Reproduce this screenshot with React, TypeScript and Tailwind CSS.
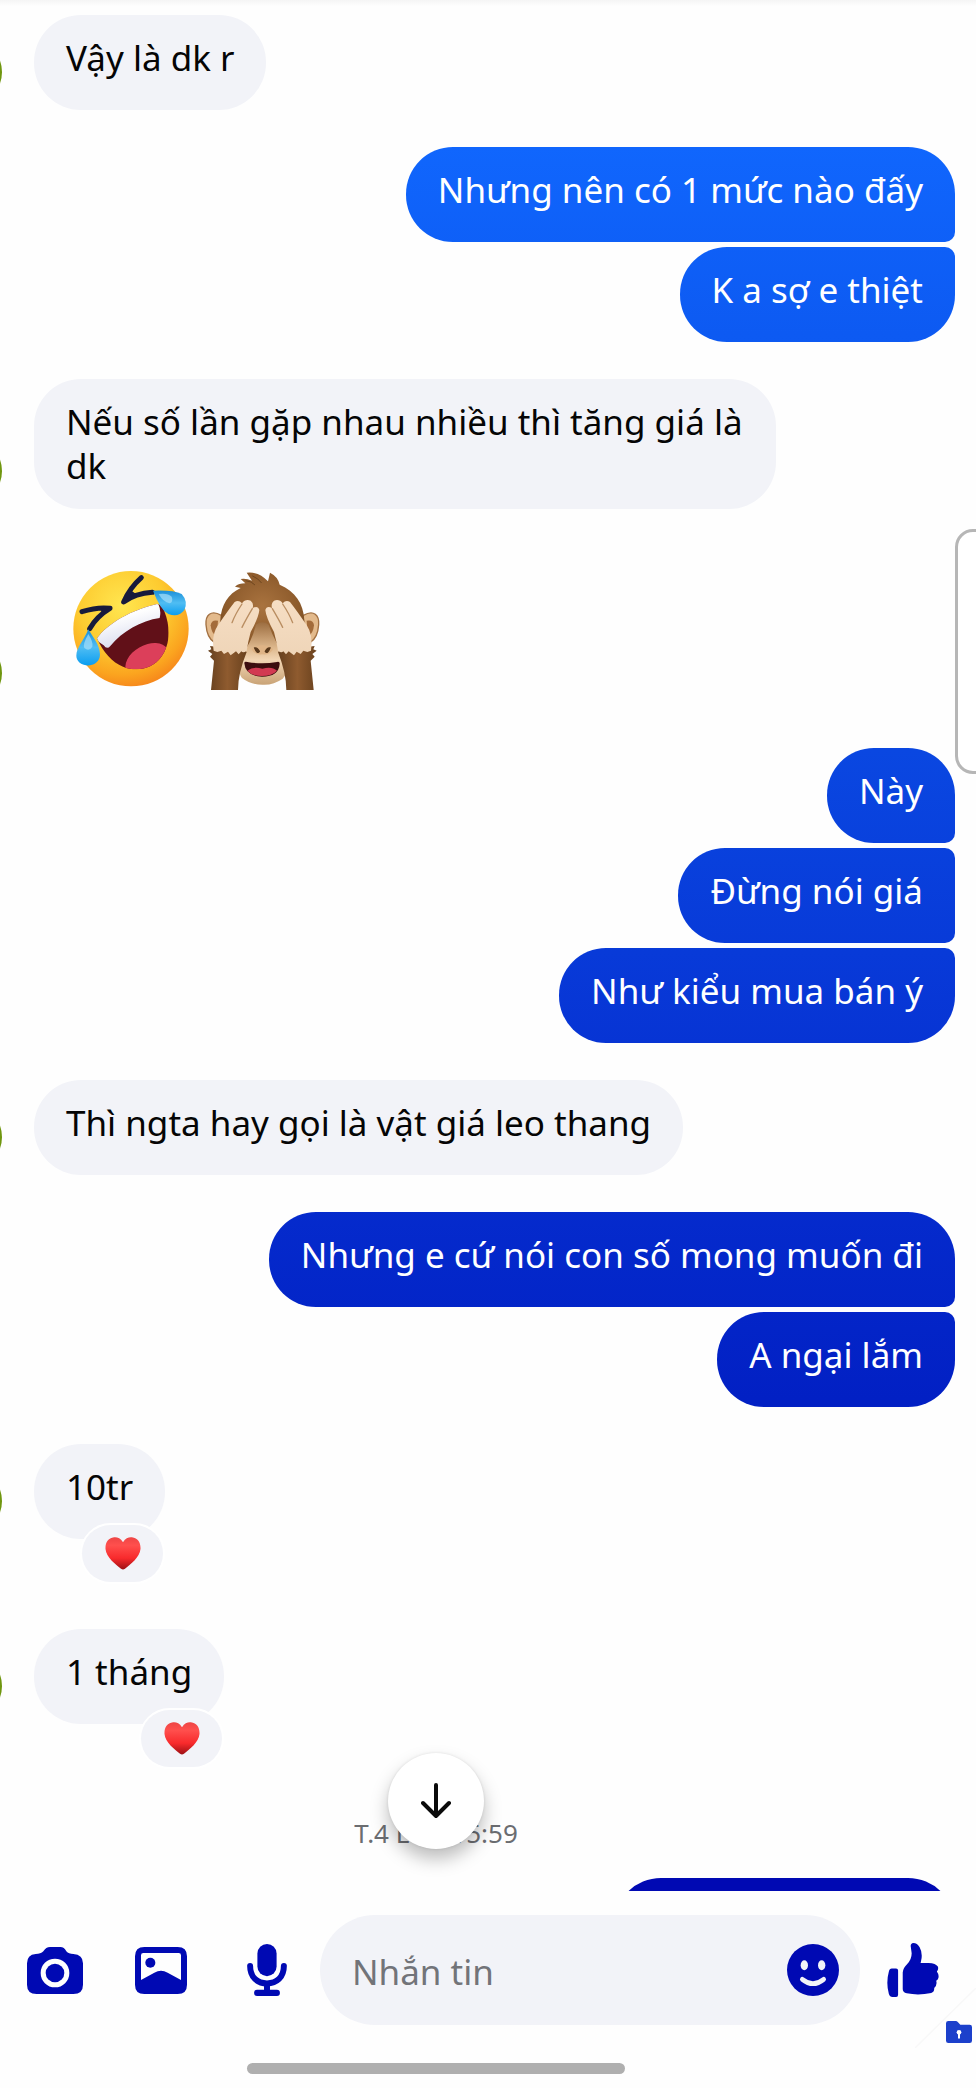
import React, { useState } from "react";
import clsx from "clsx";

type Side = "left" | "right";

interface Message {
  text?: string;
  emojis?: boolean;
  reaction?: boolean;
}

interface MessageGroup {
  side: Side;
  messages: Message[];
}

const GROUPS: MessageGroup[] = [
  { side: "left", messages: [{ text: "Vậy là dk r" }] },
  { side: "right", messages: [{ text: "Nhưng nên có 1 mức nào đấy" }, { text: "K a sợ e thiệt" }] },
  { side: "left", messages: [{ text: "Nếu số lần gặp nhau nhiều thì tăng giá là dk" }] },
  { side: "left", messages: [{ emojis: true }] },
  {
    side: "right",
    messages: [{ text: "Này" }, { text: "Đừng nói giá" }, { text: "Như kiểu mua bán ý" }],
  },
  { side: "left", messages: [{ text: "Thì ngta hay gọi là vật giá leo thang" }] },
  { side: "right", messages: [{ text: "Nhưng e cứ nói con số mong muốn đi" }, { text: "A ngại lắm" }] },
  { side: "left", messages: [{ text: "10tr", reaction: true }] },
  { side: "left", messages: [{ text: "1 tháng", reaction: true }] },
];

function LaughingEmoji() {
  return (
    <svg viewBox="94 88 360 360" className="size-[120px]" role="img" aria-label="Cười lăn lộn">
      <defs>
        <radialGradient id="face" cx="0.42" cy="0.3" r="0.75">
          <stop offset="0" stopColor="#ffe650" />
          <stop offset="0.5" stopColor="#fdcb30" />
          <stop offset="0.8" stopColor="#fba41f" />
          <stop offset="1" stopColor="#f57f1a" />
        </radialGradient>
        <linearGradient id="tear" x1="0" y1="0" x2="0" y2="1">
          <stop offset="0" stopColor="#1c8fd8" />
          <stop offset="0.5" stopColor="#4fbdf3" />
          <stop offset="1" stopColor="#0a9df0" />
        </linearGradient>
        <linearGradient id="teeth" x1="0" y1="0" x2="0.4" y2="1">
          <stop offset="0" stopColor="#c9cbe0" />
          <stop offset="0.4" stopColor="#ffffff" />
          <stop offset="1" stopColor="#d8dbee" />
        </linearGradient>
        <clipPath id="laugh">
          <path d="M172 293C206 246 276 208 352 190Q366 190 374 212C396 268 388 318 364 350C338 386 290 394 250 378C218 366 190 334 172 293Z" />
        </clipPath>
      </defs>
      <circle cx="274" cy="264" r="173" fill="url(#face)" />
      <g clipPath="url(#laugh)">
        <rect x="160" y="170" width="240" height="230" fill="#611018" />
        <ellipse cx="322" cy="360" rx="70" ry="46" transform="rotate(-30 322 360)" fill="#dc3f5a" />
        <path d="M160 292C200 240 276 204 354 186Q366 208 360 232C304 240 248 272 212 316Q202 328 192 314Z" fill="url(#teeth)" />
      </g>
      <g fill="#171a3c" stroke="#171a3c" strokeWidth="15" strokeLinecap="round" strokeLinejoin="round">
        <path d="M305 111Q270 142 252 184Q288 158 338 155" fill="none" />
        <path d="M127 213Q174 198 211 203Q170 228 150 264" fill="none" />
        <path d="M264 172L274 152L286 160ZM200 208L186 204L188 220Z" strokeWidth="4" />
      </g>
      <path d="M340 150Q402 148 426 160Q446 182 434 208Q416 232 386 220Q362 208 340 150Z" fill="url(#tear)" />
      <path d="M357 160Q384 156 396 168Q402 184 390 188Q370 184 357 160Z" fill="#a5def9" opacity="0.7" />
      <path d="M146 266C160 290 186 320 180 350C174 374 142 382 120 366C92 340 130 306 146 266Z" fill="url(#tear)" />
      <path d="M146 280Q162 306 158 318Q148 334 134 322Q128 312 146 280Z" fill="#a5def9" opacity="0.7" />
    </svg>
  );
}

function MonkeyEmoji() {
  return (
    <svg viewBox="489 90 360 360" className="size-[120px]" role="img" aria-label="Khỉ che mắt">
      <defs>
        <radialGradient id="fur" cx="0.5" cy="0.4" r="0.6">
          <stop offset="0" stopColor="#a9733f" />
          <stop offset="0.7" stopColor="#8c5a2b" />
          <stop offset="1" stopColor="#6d451e" />
        </radialGradient>
        <linearGradient id="arm" x1="0" y1="0" x2="1" y2="0">
          <stop offset="0" stopColor="#65401f" />
          <stop offset="0.5" stopColor="#8f5b2f" />
          <stop offset="1" stopColor="#6a421e" />
        </linearGradient>
        <linearGradient id="skin" x1="0" y1="0" x2="0" y2="1">
          <stop offset="0" stopColor="#f6dec4" />
          <stop offset="1" stopColor="#efd5b8" />
        </linearGradient>
        <linearGradient id="muzzle" x1="0" y1="0" x2="0" y2="1">
          <stop offset="0" stopColor="#9c6d40" />
          <stop offset="0.4" stopColor="#dcb68b" />
          <stop offset="0.6" stopColor="#f2d6b4" />
          <stop offset="1" stopColor="#c9a376" />
        </linearGradient>
      </defs>
      <path d="M544 226C512 208 496 226 498 254C500 284 510 300 524 308H550Z" fill="#e3ba8c" stroke="#a37142" strokeWidth="4" />
      <path d="M790 226C822 208 838 226 836 254C834 284 824 300 810 308H784Z" fill="#e3ba8c" stroke="#a37142" strokeWidth="4" />
      <path d="M534 242Q514 238 512 256Q514 280 530 290Z" fill="#a36b3a" />
      <path d="M800 242Q820 238 822 256Q820 280 804 290Z" fill="#a36b3a" />
      <path
        d="M541 240C544 194 564 162 602 144L585 140Q596 130 616 130L602 117Q618 114 636 122L620 98Q656 94 684 124L690 98Q714 110 719 134C766 154 790 190 793 240L800 320L770 350H568L534 320Z"
        fill="url(#fur)"
      />
      <path d="M638 108Q656 116 664 128M618 122Q636 124 644 134" fill="none" stroke="#6d451e" strokeWidth="3" strokeLinecap="round" />
      <path d="M648 254Q667 240 686 254Q706 310 738 352Q748 396 728 416Q700 436 667 434Q632 434 606 414Q590 392 600 352Q634 310 648 254Z" fill="url(#muzzle)" />
      <path d="M634 326Q667 306 700 326Q690 346 667 343Q644 346 634 326Z" fill="#dfb486" />
      <path d="M644 324Q652 322 658 334Q652 344 644 324ZM690 324Q682 322 676 334Q682 344 690 324Z" fill="#58391c" stroke="#58391c" strokeWidth="4" />
      <path d="M613 370Q612 364 622 366Q667 374 711 366Q720 364 719 372Q716 410 666 410Q616 408 613 370Z" fill="#3c0d0e" />
      <path d="M622 392Q640 378 667 386Q696 378 711 392Q696 408 666 408Q636 408 622 392Z" fill="#d23a52" />
      <path d="M510 318L514 328L504 332L517 342L510 350L522 362L513 450H594Q594 400 620 336L600 322H540Z" fill="url(#arm)" />
      <path d="M824 318L820 328L830 332L817 342L824 350L812 362L821 450H739Q739 400 714 336L734 322H794Z" fill="url(#arm)" />
      {/* hands over the eyes */}
      <path
        d="M521 332Q514 284 534 256Q562 214 584 186Q596 178 606 190Q616 176 632 182Q642 190 638 204Q654 196 658 210Q656 232 632 276Q624 306 620 332Q610 340 604 334L596 343L588 334L572 346L564 335L552 342L544 332L532 336Z"
        fill="url(#skin)"
      />
      <path
        d="M813 332Q820 284 800 256Q772 214 750 186Q738 178 728 190Q718 176 702 182Q692 190 696 204Q680 196 676 210Q678 232 702 276Q710 306 714 332Q724 340 730 334L738 343L746 334L762 346L770 335L782 342L790 332L802 336Z"
        fill="url(#skin)"
      />
      <g fill="none" stroke="#b98d61" strokeWidth="4" strokeLinecap="round">
        <path d="M606 192Q586 222 576 248M637 206Q618 238 606 262" />
        <path d="M728 192Q748 222 758 248M697 206Q716 238 728 262" />
      </g>
    </svg>
  );
}

function Heart() {
  return (
    <svg viewBox="0 0 108 100" className="h-[33px] w-9" role="img" aria-label="Yêu thích">
      <defs>
        <linearGradient id="heart" x1="0" y1="0" x2="0" y2="1">
          <stop offset="0" stopColor="#ee4545" />
          <stop offset="0.25" stopColor="#ff4f4d" />
          <stop offset="0.65" stopColor="#f82a2c" />
          <stop offset="1" stopColor="#9c1014" />
        </linearGradient>
      </defs>
      <path d="M54 16C46 3 36 0 27 1C8 3 0 18 1 36C3 62 32 82 48 96Q54 101 60 96C76 82 105 62 107 36C108 18 100 3 81 1C72 0 62 3 54 16Z" fill="url(#heart)" />
    </svg>
  );
}

function Bubble({ message, side, first, last }: { message: Message; side: Side; first: boolean; last: boolean }) {
  if (message.emojis) {
    return (
      <div className="flex gap-3 pt-6 pr-8 pb-[21px] pl-[37px]">
        <LaughingEmoji />
        <MonkeyEmoji />
      </div>
    );
  }

  return (
    <div
      className={clsx(
        "relative min-h-[95px] max-w-[742px] rounded-[47px] px-8 py-[21px] text-[35px] leading-[44px]",
        side === "left" && "bg-[#f2f3f8] text-[#050505]",
        side === "right" &&
          "bg-[linear-gradient(#116aff,#1066fd_7%,#0d5af2_16%,#0a47e1_36%,#0734d4_50%,#0220c4_67%,#0009b3_90%)] bg-fixed text-white",
        side === "right" && !first && "rounded-tr-[10px]",
        side === "right" && !last && "rounded-br-[10px]",
      )}
    >
      {message.text}
      {message.reaction && (
        <span className="absolute right-[2px] -bottom-[43px] flex h-[57px] w-[81px] items-center justify-center rounded-full bg-[#f2f3f8] ring-2 ring-white">
          <Heart />
        </span>
      )}
    </div>
  );
}

function Group({ group }: { group: MessageGroup }) {
  const hasReaction = group.messages.some((m) => m.reaction);

  if (group.side === "right") {
    return (
      <li className="flex flex-col items-end gap-[5px] pr-[21px]">
        {group.messages.map((m, i) => (
          <Bubble key={i} message={m} side="right" first={i === 0} last={i === group.messages.length - 1} />
        ))}
      </li>
    );
  }

  return (
    <li className={clsx("flex items-end gap-8", hasReaction && "mb-[53px]")}>
      {/* avatar, mostly past the left edge */}
      <div className="mb-1 -ml-[66px] size-[68px] shrink-0 rounded-full bg-[#6f960f]" />
      {group.messages.map((m, i) => (
        <Bubble key={i} message={m} side="left" first last />
      ))}
    </li>
  );
}

function CameraIcon() {
  return (
    <svg viewBox="81 139 168 141" className="h-[47px] w-14" aria-hidden="true">
      <path
        fill="currentColor"
        fillRule="evenodd"
        d="M107 160Q122 160 130 152Q138 139 150 139H181Q193 139 199 152Q206 160 220 160Q249 162 249 188V252Q249 280 220 280H110Q81 280 81 252V188Q81 162 107 160ZM165 174A43 43 0 1 0 165 260A43 43 0 1 0 165 174Z"
      />
      <circle cx="165" cy="217" r="28" fill="currentColor" />
    </svg>
  );
}

function PhotoIcon() {
  return (
    <svg viewBox="405 139 156 141" className="h-[47px] w-[52px]" aria-hidden="true">
      <path
        fill="currentColor"
        fillRule="evenodd"
        d="M433 139H533Q561 139 561 167V252Q561 280 533 280H433Q405 280 405 252V167Q405 139 433 139ZM430 157Q423 157 423 164V238L463 216Q483 204 503 216L543 238V164Q543 157 536 157Z"
      />
      <circle cx="451" cy="186" r="15" fill="currentColor" />
    </svg>
  );
}

function MicIcon() {
  return (
    <svg viewBox="741 131 120 157" className="h-[52px] w-10" aria-hidden="true">
      <rect x="772" y="131" width="58" height="97" rx="29" fill="currentColor" />
      <path d="M750 197C750 232 772 250 801 250C830 250 852 232 852 197" fill="none" stroke="currentColor" strokeWidth="18" strokeLinecap="round" />
      <rect x="792" y="250" width="18" height="26" fill="currentColor" />
      <rect x="762" y="269" width="78" height="19" rx="9" fill="currentColor" />
    </svg>
  );
}

function SmileIcon() {
  return (
    <svg viewBox="141 132 156 156" className="size-[52px]" aria-hidden="true">
      <circle cx="219" cy="210" r="78" fill="currentColor" />
      <ellipse cx="193" cy="196" rx="11" ry="15" fill="#f2f3f8" />
      <ellipse cx="245" cy="196" rx="11" ry="15" fill="#f2f3f8" />
      <path d="M187 238Q219 264 251 238" fill="none" stroke="#f2f3f8" strokeWidth="14" strokeLinecap="round" />
    </svg>
  );
}

function ThumbIcon() {
  return (
    <svg viewBox="441 125 156 163" className="h-[54px] w-[52px]" fill="currentColor" aria-hidden="true">
      <path d="M455 202H468Q474 202 474 208V281Q474 288 468 288H457Q449 288 446 278Q437 245 446 212Q448 202 455 202Z" />
      <path d="M488 214Q489 200 501 189Q515 175 515 156L512 134Q512 126 520 125Q532 125 539 138Q547 152 545 170L542 185H566Q588 186 594 196Q597 204 591 211Q599 222 595 232Q593 237 589 239Q593 252 583 261Q584 272 574 276Q536 284 500 277Q488 274 488 264Z" />
    </svg>
  );
}

function FolderIcon() {
  return (
    <svg viewBox="0 0 78 66" className="h-[22px] w-[26px]" aria-hidden="true">
      <path d="M7 0H29Q33 0 36 4L43 11H71Q78 11 78 18V59Q78 66 71 66H7Q0 66 0 59V7Q0 0 7 0Z" fill="#1c40cb" />
      <circle cx="39" cy="34" r="7" fill="#fff" />
      <rect x="36" y="36" width="6" height="17" rx="3" fill="#fff" />
    </svg>
  );
}

function IconButton({ label, children }: { label: string; children: React.ReactNode }) {
  return (
    <button type="button" aria-label={label} className="flex size-14 shrink-0 items-center justify-center">
      {children}
    </button>
  );
}

export default function App() {
  const [draft, setDraft] = useState("");

  return (
    <div className="relative flex h-screen flex-col overflow-hidden bg-[#fefefe] font-['Noto_Sans','Open_Sans',sans-serif]">
      <div className="absolute inset-x-0 top-0 h-[6px] bg-linear-to-b from-[#f5f5f5] to-[#fefefe]" />

      <main className="relative min-h-0 flex-1 overflow-hidden pt-[15px]">
        <ul className="flex flex-col gap-[37px]">
          {GROUPS.map((group, i) => (
            <Group key={i} group={group} />
          ))}
        </ul>
        <p className="mt-[38px] pr-[104px] text-center text-[26px] leading-9 text-[#6b6d71]">T.4 LÚC 15:59</p>
        <div className="mt-[27px] flex justify-end pr-[21px]">
          <div className="h-[95px] w-[341px] rounded-[47px] bg-[#0009b3]" />
        </div>

        <div className="absolute inset-x-0 bottom-[42px] flex justify-center pr-[104px]">
          <button
            type="button"
            aria-label="Cuộn xuống cuối"
            className="flex size-24 items-center justify-center rounded-full bg-white shadow-[0_10px_18px_rgba(0,0,0,0.26),0_0_3px_rgba(0,0,0,0.1)]"
          >
            <svg viewBox="0 0 31 36" className="h-9 w-[31px]" fill="none" stroke="#0a0a0a" strokeWidth="4" strokeLinecap="round" strokeLinejoin="round" aria-hidden="true">
              <path d="M15 2V33M2 20L15 33L28 20" />
            </svg>
          </button>
        </div>
      </main>

      {/* edge panel handle */}
      <div className="absolute top-[529px] -right-5 h-[245px] w-[41px] rounded-[18px] border-[3px] border-[#b6b6b6] bg-white" />

      <footer className="shrink-0 pt-6 pb-[14px]">
        <div className="flex items-center gap-[25px] pr-[35px] pl-[27px] text-[#0009b3]">
          <div className="flex gap-[50px]">
            <IconButton label="Máy ảnh">
              <CameraIcon />
            </IconButton>
            <IconButton label="Thư viện ảnh">
              <PhotoIcon />
            </IconButton>
            <IconButton label="Ghi âm">
              <MicIcon />
            </IconButton>
          </div>
          <div className="flex h-[110px] min-w-0 flex-1 items-center rounded-full bg-[#f2f3f8] pr-[19px] pl-8">
            <input
              type="text"
              aria-label="Nhắn tin"
              placeholder="Nhắn tin"
              value={draft}
              onChange={(e) => setDraft(e.target.value)}
              className="min-w-0 flex-1 bg-transparent pt-1 text-[35px] leading-[44px] text-[#050505] outline-none placeholder:text-[#727479]"
            />
            <IconButton label="Biểu tượng cảm xúc">
              <SmileIcon />
            </IconButton>
          </div>
          <IconButton label="Thích">
            <ThumbIcon />
          </IconButton>
        </div>
        <div className="mt-[38px] flex justify-center pr-[104px]">
          <div className="h-[11px] w-[378px] rounded-full bg-[#afafaf]" />
        </div>
      </footer>

      <div className="absolute right-1 bottom-[45px]">
        <FolderIcon />
      </div>
      <svg viewBox="0 0 61 60" className="absolute right-0 bottom-[40px] h-[60px] w-[61px]" aria-hidden="true">
        <path d="M0 60L61 0" stroke="#f8f8f8" strokeWidth="1.500" />
      </svg>
    </div>
  );
}
